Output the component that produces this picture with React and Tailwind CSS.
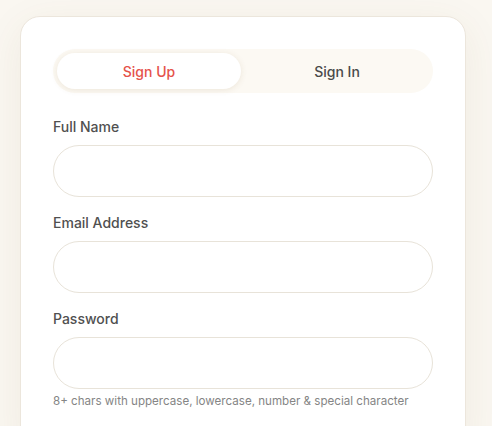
export default function App() {
  const font = { fontFamily: '"Inter", "Noto Sans", sans-serif' };
  return (
    <div className="min-h-[426px] w-[492px] overflow-hidden bg-[#faf7f1] pl-5 pt-4" style={font}>
      <div className="w-[446px] rounded-[20px] border border-[#ece6dc] bg-white px-8 pt-8 pb-10 shadow-[0_10px_40px_rgba(120,90,40,0.08)]">
        <div className="flex h-11 items-center rounded-full bg-[#fcf9f3] p-1">
          <div className="flex h-9 flex-1 pr-1">
            <button className="flex h-9 flex-1 items-center justify-center rounded-full bg-white text-[14px] font-medium text-[#e5524a] shadow-[0_1px_6px_rgba(120,90,40,0.12)]">
              Sign Up
            </button>
          </div>
          <button className="flex h-9 flex-1 items-center justify-center rounded-full text-[14px] font-medium text-[#4a4a4a]">
            Sign In
          </button>
        </div>
        <div className="mt-6 flex flex-col">
          <label className="text-[14px] font-medium leading-5 text-[#505050]">Full Name</label>
          <input className="mt-2 h-[52px] w-full rounded-full border border-[#e8e3d9] bg-white px-5 outline-none" />
          <label className="mt-4 text-[14px] font-medium leading-5 text-[#505050]">Email Address</label>
          <input className="mt-2 h-[52px] w-full rounded-full border border-[#e8e3d9] bg-white px-5 outline-none" />
          <label className="mt-4 text-[14px] font-medium leading-5 text-[#505050]">Password</label>
          <input className="mt-2 h-[52px] w-full rounded-full border border-[#e8e3d9] bg-white px-5 outline-none" />
          <p className="mt-1 text-[11.6px] leading-4 text-[#858585]">
            8+ chars with uppercase, lowercase, number &amp; special character
          </p>
        </div>
      </div>
    </div>
  );
}
